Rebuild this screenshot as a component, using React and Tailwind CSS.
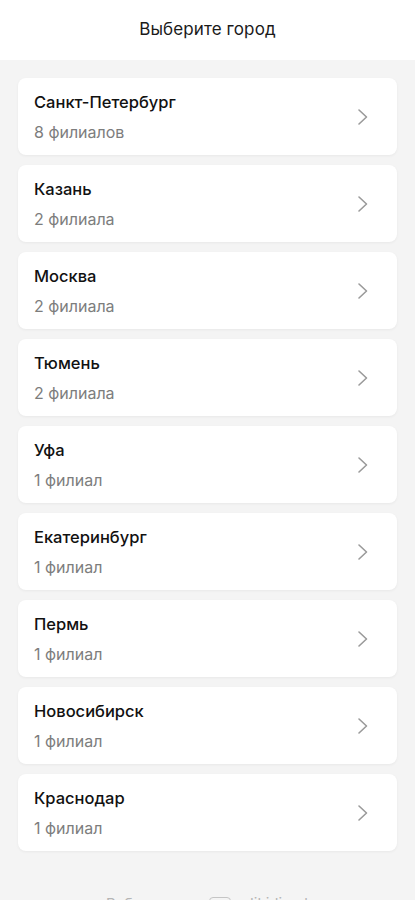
import React from "react";

const cities = [
  ["Санкт-Петербург", "8 филиалов"],
  ["Казань", "2 филиала"],
  ["Москва", "2 филиала"],
  ["Тюмень", "2 филиала"],
  ["Уфа", "1 филиал"],
  ["Екатеринбург", "1 филиал"],
  ["Пермь", "1 филиал"],
  ["Новосибирск", "1 филиал"],
  ["Краснодар", "1 филиал"],
];

export default function App() {
  return (
    <div className="w-[415px] min-h-[900px] bg-[#f4f4f4] font-['Inter','Liberation_Sans',sans-serif] overflow-hidden">
      <div className="h-[60px] bg-white flex items-center justify-center">
        <span className="text-[17px] text-[#1a1a1a] tracking-[0.1px]">Выберите город</span>
      </div>
      <div className="px-[18px] pt-[18px] flex flex-col gap-[10px]">
        {cities.map(([name, sub]) => (
          <div
            key={name}
            className="h-[77px] bg-white rounded-[8px] shadow-[0_1px_3px_rgba(0,0,0,0.05)] flex items-center justify-between pl-[16px] pr-[28px]"
          >
            <div className="flex flex-col">
              <span className="text-[16.5px] font-medium text-[#111] leading-[20px]">{name}</span>
              <span className="text-[16px] text-[#7d7d7d] leading-[20px] mt-[10px]">{sub}</span>
            </div>
            <svg width="12" height="18" viewBox="0 0 12 18" fill="none">
              <path d="M2 2l7.5 7-7.5 7" stroke="#9a9a9a" strokeWidth="1.6" strokeLinecap="round" strokeLinejoin="round" />
            </svg>
          </div>
        ))}
      </div>
      <div className="mt-[42px] flex items-center justify-center gap-[14px] text-[15px] text-[#b5b5b5]">
        <span>Работает на</span>
        <span className="inline-block w-[22px] h-[14px] rounded-[4px] border border-[#c5c5c5]"></span>
        <span>dikidi.net</span>
      </div>
    </div>
  );
}
